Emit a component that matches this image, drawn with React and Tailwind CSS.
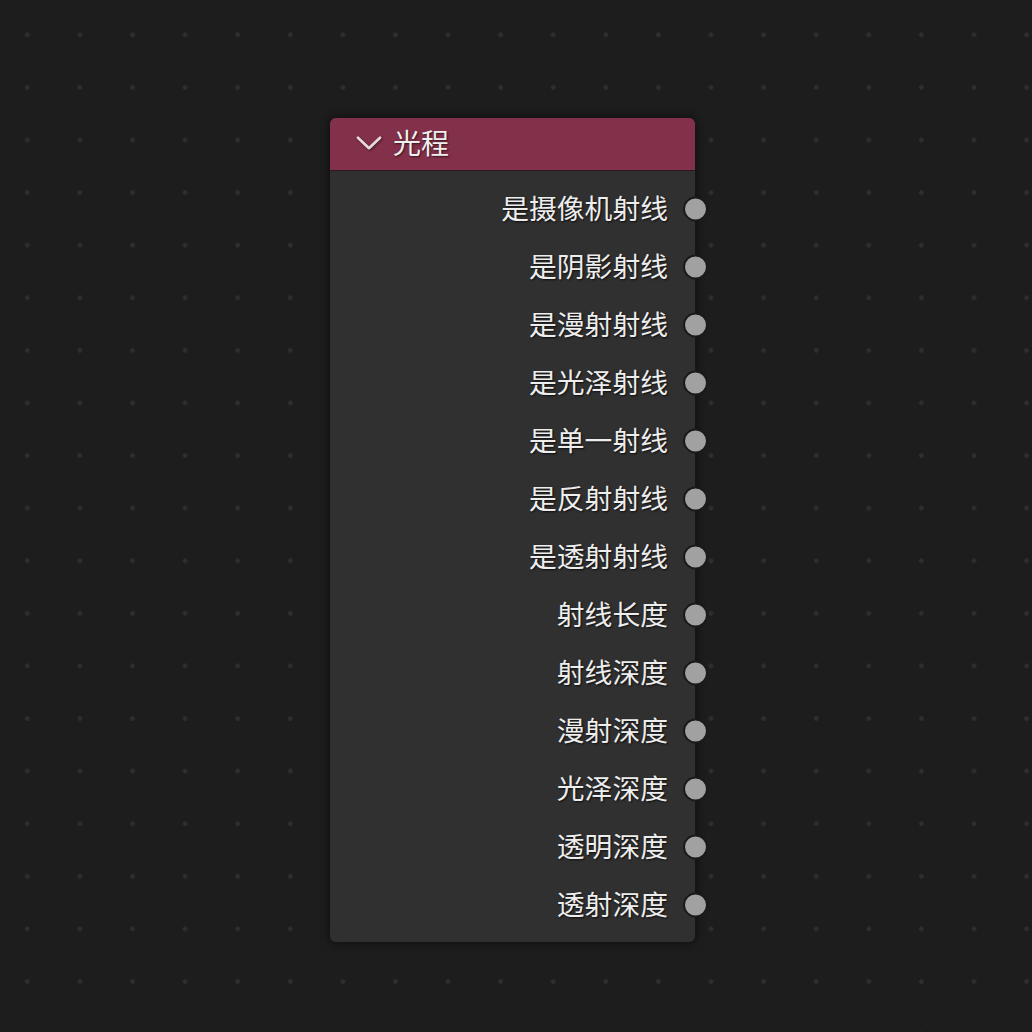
import React from "react";

const rows = [
  "是摄像机射线",
  "是阴影射线",
  "是漫射射线",
  "是光泽射线",
  "是单一射线",
  "是反射射线",
  "是透射射线",
  "射线长度",
  "射线深度",
  "漫射深度",
  "光泽深度",
  "透明深度",
  "透射深度",
];

export default function App() {
  return (
    <div
      className="relative w-[1032px] h-[1032px] overflow-hidden bg-[#1d1d1d] bg-[radial-gradient(circle,#2e2e2e_0,#2e2e2e_2px,transparent_2.6px)] bg-[size:52.6px_52.6px] bg-[position:1px_8.5px]"
      style={{ fontFamily: '"Noto Sans CJK SC", "Noto Sans", sans-serif' }}
    >
      <div className="absolute left-[329px] top-[117px] w-[367px] rounded-[7px] border border-[#151515] bg-[#303030] shadow-[0_0_8px_rgba(0,0,0,0.55)]">
        <div className="flex h-[53px] items-center rounded-t-[6px] bg-[#83304a] border-b border-[#2a1a20] pb-[4px]">
          <svg
            width="26"
            height="14"
            viewBox="0 0 26 14"
            className="ml-[26px] mr-[11px] mt-[2px] drop-shadow-[1px_1px_1px_rgba(0,0,0,0.5)]"
          >
            <path d="M2 1.8 L13 12.2 L24 1.8" fill="none" stroke="#e6dade" strokeWidth="2.7" strokeLinecap="round" strokeLinejoin="round" />
          </svg>
          <span className="text-[28px] leading-none text-[#efefef] [text-shadow:1px_1px_2px_rgba(0,0,0,0.6)]">
            光程
          </span>
        </div>
        <div className="flex flex-col pt-[9px] pb-[8px]">
          {rows.map((r) => (
            <div key={r} className="relative flex h-[58px] items-center justify-end pr-[27px] pb-[3px]">
              <span className="text-[27.8px] leading-none text-[#ededed] [text-shadow:1px_1px_2px_rgba(0,0,0,0.75)]">
                {r}
              </span>
              <div className="absolute right-[-13px] top-1/2 h-[25px] w-[25px] -translate-y-1/2 rounded-full border-[2px] border-[#1a1a1a] bg-[#a1a1a1]" />
            </div>
          ))}
        </div>
      </div>
    </div>
  );
}
